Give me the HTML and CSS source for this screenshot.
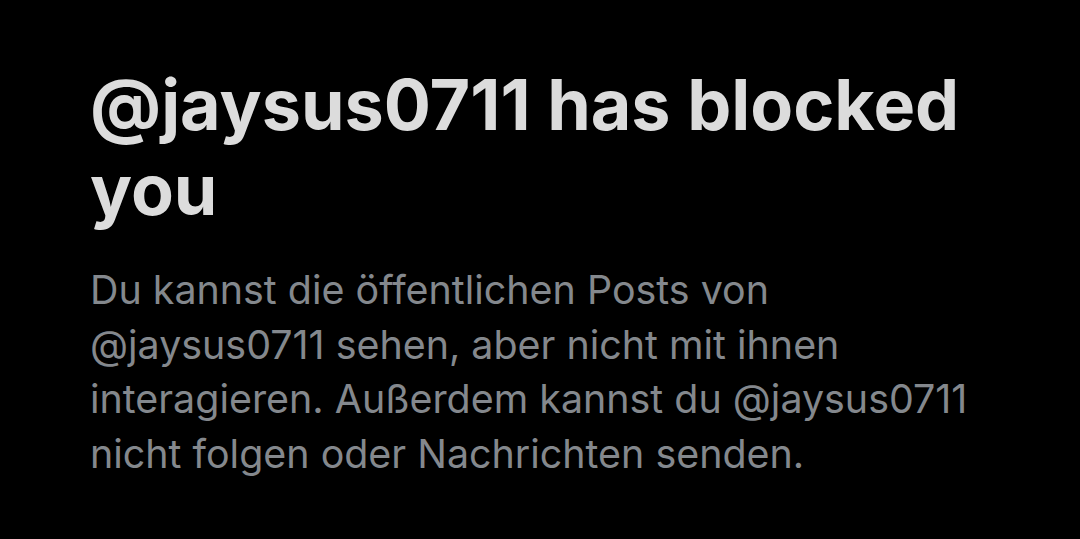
FILE: index.html
```html
<!DOCTYPE html>
<html lang="de">
<head>
  <meta charset="UTF-8" />
  <meta name="viewport" content="width=device-width, initial-scale=1.0" />
  <title>Blocked</title>
  <link rel="stylesheet" href="styles.css">
</head>
<body>
  <div class="blocked">
    <h1 class="blocked-title">@jaysus0711 has blocked you</h1>
    <p class="blocked-text">Du kannst die öffentlichen Posts von @jaysus0711 sehen, aber nicht mit ihnen interagieren. Außerdem kannst du @jaysus0711 nicht folgen oder Nachrichten senden.</p>
  </div>
</body>
</html>
```

FILE: styles.css
```css
html, body {
  margin: 0;
  background: #000;
  height: 100%;
}
body {
  font-family: Inter, "Noto Sans", sans-serif;
}
.blocked {
  padding: 62px 90px 0 90px;
  width: 900px;
}
.blocked-title {
  margin: 0;
  font-size: 70px;
  line-height: 85px;
  font-weight: 700;
  color: #dcdcdc;
}
.blocked-text {
  margin: 31px 0 0;
  font-size: 39.4px;
  line-height: 54.5px;
  font-weight: 400;
  color: #84888d;
}
```
